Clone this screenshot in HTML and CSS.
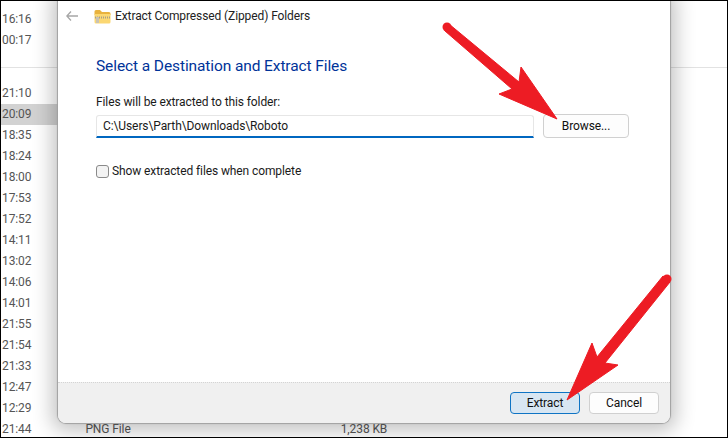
FILE: index.html
```html
<!DOCTYPE html>
<html lang="en">
<head>
  <meta charset="UTF-8">
  <meta name="viewport" content="width=device-width, initial-scale=1.0">
  <title>Extract Compressed (Zipped) Folders</title>
  <link rel="stylesheet" href="styles.css">
</head>
<body>
  <div class="screen">
    <!-- file list behind the dialog -->
    <div class="filelist">
      <div class="row">16:16</div>
      <div class="row">00:17</div>
      <div class="group-gap"></div>
      <div class="row">21:10</div>
      <div class="row selected">20:09</div>
      <div class="row">18:35</div>
      <div class="row">18:24</div>
      <div class="row">18:00</div>
      <div class="row">17:53</div>
      <div class="row">17:52</div>
      <div class="row">14:11</div>
      <div class="row">13:02</div>
      <div class="row">14:06</div>
      <div class="row">14:01</div>
      <div class="row">21:55</div>
      <div class="row">21:54</div>
      <div class="row">21:33</div>
      <div class="row">12:47</div>
      <div class="row">12:29</div>
      <div class="row">
        <span class="col-time">21:44</span>
        <span class="col-type">PNG File</span>
        <span class="col-size">1,238 KB</span>
      </div>
    </div>

    <div class="dialog">
      <div class="titlebar">
        <svg class="back" width="12" height="10" viewBox="0 0 12 10">
          <path d="M5 .5 .8 5 5 9.500M.8 5H12" fill="none" stroke="#a6a6a6" stroke-width="1.300"/>
        </svg>
        <svg class="folder" width="17" height="15" viewBox="0 0 17 15">
          <path d="M.5 2.500Q.5 1 2 1H6L8 3H15Q16.500 3 16.500 4.500V6H.5Z" fill="#e8b23e"/>
          <path d="M.5 5H16.500V13Q16.500 14.500 15 14.500H2Q.5 14.500 .5 13Z" fill="#fbd772"/>
          <path d="M1 8.500H16" stroke="#a89f88" stroke-width="2" stroke-dasharray="1 1"/>
          <rect x="2" y="8" width="3" height="6" fill="#c9c3b4"/>
        </svg>
        <span class="title">Extract Compressed (Zipped) Folders</span>
      </div>
      <div class="content">
        <h1 class="heading">Select a Destination and Extract Files</h1>
        <label class="field-label">Files will be extracted to this folder:</label>
        <div class="path-row">
          <div class="path-input">C:\Users\Parth\Downloads\Roboto</div>
          <button class="btn browse">Browse...</button>
        </div>
        <div class="check-row">
          <span class="checkbox"></span>
          <span>Show extracted files when complete</span>
        </div>
      </div>
      <div class="footer">
        <button class="btn primary">Extract</button>
        <button class="btn">Cancel</button>
      </div>
    </div>

    <!-- red annotation arrows -->
    <svg class="arrows" width="728" height="438" viewBox="0 0 728 438">
      <path d="M445 31 449 24 519 82 521 67 557 119 499 94 512 89Z" fill="#ed1c24" stroke="#ed1c24" stroke-linejoin="round"/>
      <circle cx="447" cy="27" r="4.500" fill="#ed1c24"/>
      <path d="M663 276 670 282 605 363 618 365 567 400 592 343 597 357Z" fill="#ed1c24" stroke="#ed1c24" stroke-linejoin="round"/>
      <circle cx="667" cy="279" r="4.500" fill="#ed1c24"/>
    </svg>
  </div>
</body>
</html>
```

FILE: styles.css
```css
* {
  box-sizing: border-box;
}

body {
  margin: 0;
  font-family: Roboto, "Open Sans", sans-serif;
  font-size: 12px;
  letter-spacing: -0.1px;
  background-color: #fff;
}

.screen {
  position: relative;
  width: 728px;
  height: 438px;
  overflow: hidden;
  border: 1px solid #000;
  background-color: #fff;
}

.filelist {
  padding-top: 8px;
  color: #555;
}

.row {
  display: flex;
  height: 21px;
  line-height: 21px;
  padding-left: 1px;
  white-space: nowrap;
}

.row.selected {
  width: 60px;
  background-color: #d2d2d2;
}

.group-gap {
  height: 32px;
  background: linear-gradient(#fff 16px, #e2e2e2 16px, #e2e2e2 17px, #fff 17px);
}

.col-type {
  margin-left: 54px;
}

.col-size {
  margin-left: 210px;
}

.dialog {
  position: absolute;
  left: 57px;
  top: -8px;
  width: 612px;
  height: 430px;
  display: flex;
  flex-direction: column;
  background-color: #fff;
  border-radius: 8px;
  box-shadow: 0 0 1px 1px #a0a0a0, 0 2px 20px 6px rgba(0, 0, 0, 0.24);
  color: #1a1a1a;
}

.titlebar {
  display: flex;
  align-items: center;
  height: 30px;
  margin-top: 8px;
  padding-left: 8px;
  color: #222;
}

.folder {
  margin-left: 16px;
}

.title {
  margin-left: 4px;
}

.content {
  flex: 1;
  padding: 23px 38px 0;
}

.heading {
  margin: 0;
  font-size: 15.5px;
  font-weight: 400;
  line-height: 24px;
  color: #003399;
}

.field-label {
  display: block;
  margin-top: 16px;
  line-height: 16px;
}

.path-row {
  display: flex;
  align-items: center;
  gap: 9px;
  margin-top: 4px;
}

.path-input {
  width: 438px;
  height: 23px;
  padding-left: 6px;
  line-height: 20px;
  border: 1px solid #e6e6e6;
  border-bottom: 2px solid #0067c0;
  border-radius: 3px 3px 0 0;
}

.btn {
  width: 70px;
  height: 22px;
  padding: 0;
  font: inherit;
  letter-spacing: inherit;
  color: #111;
  background-color: #fdfdfd;
  border: 1px solid #d0d0d0;
  border-radius: 4px;
}

.browse {
  width: 86px;
  height: 24px;
}

.check-row {
  display: flex;
  align-items: center;
  gap: 3px;
  margin-top: 25px;
  line-height: 16px;
}

.checkbox {
  width: 13px;
  height: 13px;
  background-color: #f3f3f3;
  border: 1px solid #8a8a8a;
  border-radius: 3px;
}

.footer {
  display: flex;
  justify-content: flex-end;
  align-items: center;
  gap: 9px;
  height: 41px;
  padding-right: 11px;
  background-color: #f0f0f0;
  border-top: 1px dotted #d4d4d4;
  border-radius: 0 0 8px 8px;
}

.primary {
  background-color: #d8e6f2;
  border-color: #0f74c4;
}

.arrows {
  position: absolute;
  left: -1px;
  top: -1px;
}
```
